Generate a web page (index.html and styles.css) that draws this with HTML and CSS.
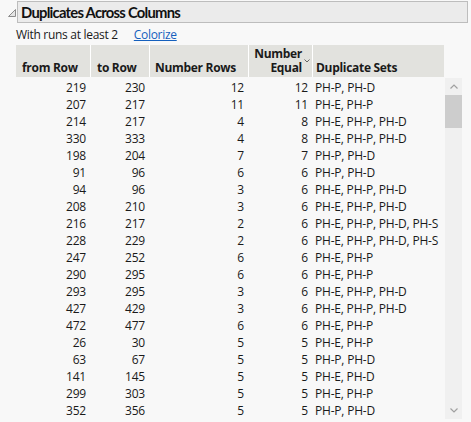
FILE: index.html
```html
<!DOCTYPE html>
<html>
<head>
<meta charset="utf-8">
<link rel="stylesheet" href="styles.css">
</head>
<body>
<div class="outline">
  <svg class="tri" width="10" height="10" viewBox="0 0 10 10"><polygon points="8.5,1.5 8.5,8.5 1.5,8.5" fill="#e4e4e4" stroke="#8c8c8c" stroke-width="1"/></svg>
  <div class="title">Duplicates Across Columns</div>
</div>
<div class="sub"><span>With runs at least 2</span><a class="link" href="#">Colorize</a></div>
<div class="tablewrap">
  <div class="table">
    <div class="head">
      <div class="hc r c1">from Row</div>
      <div class="hc r c2">to Row</div>
      <div class="hc r c3">Number Rows</div>
      <div class="hc r c4 sortcol"><div class="two"><div>Number</div><div>Equal</div></div><svg class="chev" width="6" height="4" viewBox="0 0 6 4"><polyline points="0.5,0.5 3,3 5.5,0.5" fill="none" stroke="#666" stroke-width="1"/></svg></div>
      <div class="hc c5">Duplicate Sets</div>
    </div>
    <div class="body">
      <div class="row"><span class="r">219</span><span class="r">230</span><span class="r">12</span><span class="r">12</span><span class="l">PH-P, PH-D</span></div>
      <div class="row"><span class="r">207</span><span class="r">217</span><span class="r">11</span><span class="r">11</span><span class="l">PH-E, PH-P</span></div>
      <div class="row"><span class="r">214</span><span class="r">217</span><span class="r">4</span><span class="r">8</span><span class="l">PH-E, PH-P, PH-D</span></div>
      <div class="row"><span class="r">330</span><span class="r">333</span><span class="r">4</span><span class="r">8</span><span class="l">PH-E, PH-P, PH-D</span></div>
      <div class="row"><span class="r">198</span><span class="r">204</span><span class="r">7</span><span class="r">7</span><span class="l">PH-P, PH-D</span></div>
      <div class="row"><span class="r">91</span><span class="r">96</span><span class="r">6</span><span class="r">6</span><span class="l">PH-P, PH-D</span></div>
      <div class="row"><span class="r">94</span><span class="r">96</span><span class="r">3</span><span class="r">6</span><span class="l">PH-E, PH-P, PH-D</span></div>
      <div class="row"><span class="r">208</span><span class="r">210</span><span class="r">3</span><span class="r">6</span><span class="l">PH-E, PH-P, PH-D</span></div>
      <div class="row"><span class="r">216</span><span class="r">217</span><span class="r">2</span><span class="r">6</span><span class="l">PH-E, PH-P, PH-D, PH-S</span></div>
      <div class="row"><span class="r">228</span><span class="r">229</span><span class="r">2</span><span class="r">6</span><span class="l">PH-E, PH-P, PH-D, PH-S</span></div>
      <div class="row"><span class="r">247</span><span class="r">252</span><span class="r">6</span><span class="r">6</span><span class="l">PH-E, PH-P</span></div>
      <div class="row"><span class="r">290</span><span class="r">295</span><span class="r">6</span><span class="r">6</span><span class="l">PH-E, PH-P</span></div>
      <div class="row"><span class="r">293</span><span class="r">295</span><span class="r">3</span><span class="r">6</span><span class="l">PH-E, PH-P, PH-D</span></div>
      <div class="row"><span class="r">427</span><span class="r">429</span><span class="r">3</span><span class="r">6</span><span class="l">PH-E, PH-P, PH-D</span></div>
      <div class="row"><span class="r">472</span><span class="r">477</span><span class="r">6</span><span class="r">6</span><span class="l">PH-E, PH-P</span></div>
      <div class="row"><span class="r">26</span><span class="r">30</span><span class="r">5</span><span class="r">5</span><span class="l">PH-E, PH-P</span></div>
      <div class="row"><span class="r">63</span><span class="r">67</span><span class="r">5</span><span class="r">5</span><span class="l">PH-P, PH-D</span></div>
      <div class="row"><span class="r">141</span><span class="r">145</span><span class="r">5</span><span class="r">5</span><span class="l">PH-E, PH-D</span></div>
      <div class="row"><span class="r">299</span><span class="r">303</span><span class="r">5</span><span class="r">5</span><span class="l">PH-E, PH-P</span></div>
      <div class="row"><span class="r">352</span><span class="r">356</span><span class="r">5</span><span class="r">5</span><span class="l">PH-P, PH-D</span></div>
    </div>
  </div>
  <div class="scroll">
    <div class="arrow"><svg width="8" height="5" viewBox="0 0 8 5"><polyline points="0.5,4.5 4,1 7.5,4.5" fill="none" stroke="#a0a0a0" stroke-width="1.2"/></svg></div>
    <div class="thumb"></div>
    <div class="track"></div>
    <div class="arrow"><svg width="8" height="5" viewBox="0 0 8 5"><polyline points="0.5,0.5 4,4 7.5,0.5" fill="none" stroke="#a0a0a0" stroke-width="1.2"/></svg></div>
  </div>
</div>
</body>
</html>
```
FILE: styles.css
```css
html, body {
  margin: 0;
  padding: 0;
  background: #f8f8f8;
}
body {
  width: 471px;
  height: 422px;
  overflow: hidden;
  font-family: "Open Sans", "Noto Sans", sans-serif;
  color: #1a1a1a;
}
.outline {
  display: flex;
  align-items: flex-start;
  padding: 1px 3px 0 7px;
}
.tri {
  margin-top: 7px;
  flex: none;
}
.title {
  flex: 1;
  height: 20px;
  border: 1px solid #bdbdbd;
  background: #ebebeb;
  font-family: Lato, "Open Sans", sans-serif;
  font-weight: bold;
  font-size: 14.8px;
  line-height: 21px;
  padding-left: 3px;
  letter-spacing: -0.75px;
  color: #111111;
  box-sizing: content-box;
}
.sub {
  display: flex;
  gap: 16px;
  padding-left: 16px;
  margin-top: 3px;
  font-size: 12px;
  line-height: 18px;
  letter-spacing: -0.3px;
}
.link {
  color: #1560bd;
  text-decoration: underline;
}
.tablewrap {
  display: flex;
  margin-top: 1px;
  padding-left: 16px;
}
.table {
  width: 428px;
  overflow: hidden;
}
.head {
  display: grid;
  grid-template-columns: 74px 59px 99px 64px 132px;
  height: 32px;
  background: #e2e2de;
  font-weight: bold;
  font-size: 12px;
  line-height: 15px;
  letter-spacing: -0.3px;
}
.hc {
  display: flex;
  align-items: flex-end;
  padding: 0 4px 2px 4px;
  border-left: 1px solid #ffffff;
  white-space: nowrap;
}
.hc.c1 { border-left: none; justify-content: flex-start; padding-left: 6px; }
.hc.c2 { justify-content: flex-start; padding-left: 6px; }
.hc.c3 { justify-content: flex-start; padding-left: 5px; }
.hc.c4 { justify-content: flex-end; padding-right: 2px; }
.hc.c5 { padding-left: 3px; }
.two { display: flex; flex-direction: column; align-items: flex-end; line-height: 14px; }
.chev { margin: 0 0 12px 2px; }
.body {
  padding-top: 2px;
}
.row {
  display: grid;
  grid-template-columns: 74px 59px 99px 64px 132px;
  height: 17px;
  font-size: 12px;
  line-height: 17px;
  letter-spacing: -0.2px;
  white-space: nowrap;
}
.row .r {
  text-align: right;
  padding-right: 4px;
}
.row .l {
  padding-left: 3px;
  overflow: hidden;
}
.scroll {
  display: flex;
  flex-direction: column;
  width: 17px;
  height: 341px;
  margin-top: 33px;
  margin-left: 1px;
  background: #f0f0f0;
}
.arrow {
  height: 17px;
  display: flex;
  align-items: center;
  justify-content: center;
}
.thumb {
  height: 33px;
  background: #cdcdcd;
}
.track {
  flex: 1;
}
```
